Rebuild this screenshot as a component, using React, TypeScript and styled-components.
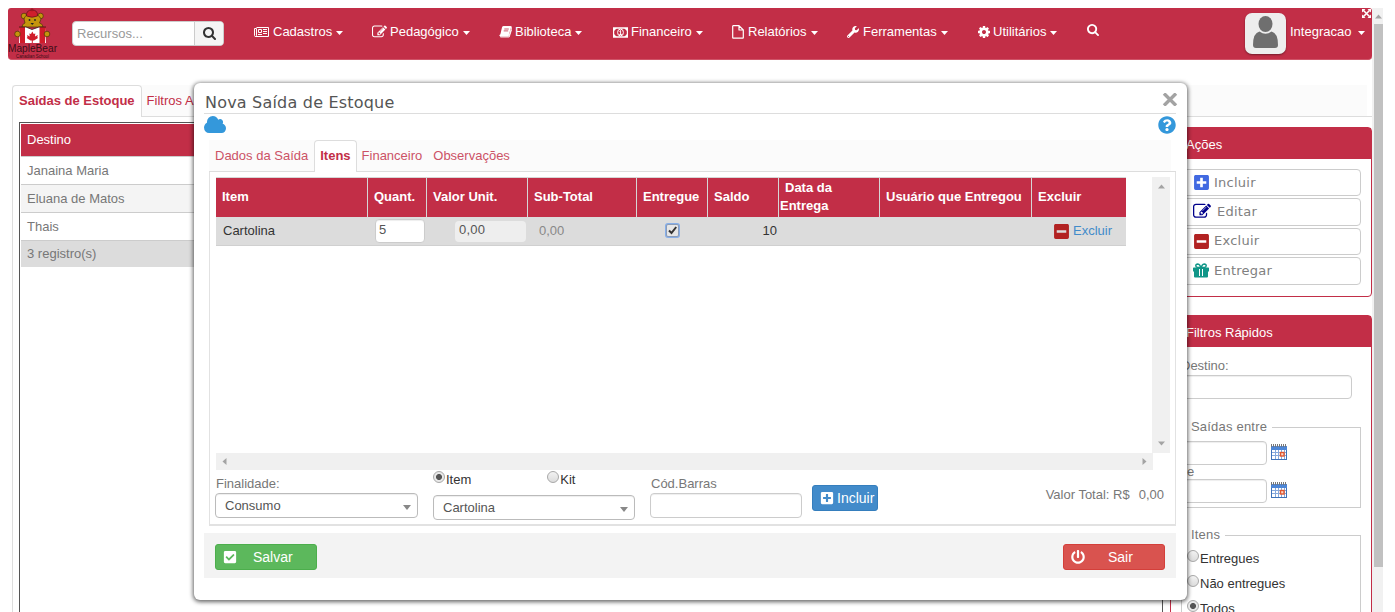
import React from "react";
import styled, { createGlobalStyle } from "styled-components";
import {
  FaWrench,
  FaPlusSquare,
  FaMinusSquare,
  FaCheckSquare,
  FaPowerOff,
  FaQuestionCircle,
} from "react-icons/fa";

const RED = "#c22e47";

const Global = createGlobalStyle`
  *, *::before, *::after { box-sizing: border-box; }
  body { margin: 0; background: #fff; font: 13px/18px "Liberation Sans", Arial, sans-serif; color: #777; }
  input, button { font-family: inherit; }
`;

const Screen = styled.div`
  position: relative;
  width: 1395px;
  height: 612px;
  overflow: hidden;
  padding: 8px 12px 0 8px;
  display: flex;
  align-items: flex-start;
`;

const Page = styled.div`
  width: 1364px;
  height: 604px;
  flex: none;
`;

/* ---------- header ---------- */
const Header = styled.header`
  height: 52px;
  display: flex;
  background: ${RED};
  border-bottom: 1px solid #cf5468;
  border-radius: 3px 3px 4px 4px;
  color: #fff;
`;

const LogoBox = styled.div`
  width: 64px;
  height: 52px;
`;

const SearchGroup = styled.div`
  display: flex;
  width: 152px;
  height: 25px;
  margin-top: 13px;
  border: 1px solid #ccc;
  border-radius: 4px;
  overflow: hidden;
  background: #fff;
`;

const SearchField = styled.div`
  width: 121px;
  padding-left: 4px;
  line-height: 24px;
  color: #999;
`;

const SearchButton = styled.div`
  flex: 1;
  display: flex;
  align-items: center;
  justify-content: center;
  border-left: 1px solid #ccc;
  background: #f5f5f5;
  color: #333;
`;

const Nav = styled.nav`
  display: flex;
  margin-left: 30px;
  padding-top: 15px;
  width: 991px;
`;

const NavItem = styled.div<{ $w: number }>`
  width: ${(p) => p.$w}px;
  height: 18px;
  display: flex;
  align-items: center;
  white-space: nowrap;
`;

const NavIcon = styled.span<{ $w: number }>`
  width: ${(p) => p.$w}px;
  display: flex;
`;

const CaretBox = styled.span<{ $gap: number }>`
  display: flex;
  margin: 2px 0 0 ${(p) => p.$gap}px;
`;

const NavSearch = styled.div`
  padding-top: 1px;
  display: flex;
`;

const User = styled.div`
  position: relative;
  flex: 1;
  display: flex;
  align-items: center;
  height: 48px;
`;

const Avatar = styled.div`
  width: 41px;
  height: 41px;
  margin: 3px 4px 0 0;
  border-radius: 7px;
  background: #eee;
  box-shadow: 0 1px 2px rgba(0, 0, 0, 0.4);
`;

const Expand = styled.div`
  position: absolute;
  right: 1px;
  top: 1px;
  width: 9px;
  height: 9px;
  display: flex;
`;

/* ---------- page body ---------- */
const Workspace = styled.main`
  margin: 25px 0 0 4px;
  height: 540px;
`;

const TabStrip = styled.div<{ $gapRight: number }>`
  display: flex;
  height: 32px;
  border-bottom: 1px solid #ddd;
  background: linear-gradient(#fbfbfb, #fbfbfb) 0 0 / calc(100% - ${(p) => p.$gapRight}px) 100% no-repeat;
  color: ${RED};
`;

const Tab = styled.div<{ $active?: boolean; $pad: string; $soft?: boolean }>`
  height: 32px;
  padding: ${(p) => p.$pad};
  line-height: 30px;
  white-space: nowrap;
  ${(p) => p.$soft && "color: #cc5266;"}
  ${(p) =>
    p.$active &&
    `font-weight: bold; color: ${RED}; background: #fff; border: 1px solid #ddd; border-bottom: 0; border-radius: 4px 4px 0 0;`}
`;

const WorkBody = styled.div`
  display: flex;
  height: 508px;
  padding-top: 5px;
  padding-left: 6px;
  border-left: 1px solid #ddd;
`;

const ListFrame = styled.section`
  width: 1144px;
  height: 520px;
  border: 1px solid #555;
  padding: 1px;
`;

const ListHead = styled.div`
  height: 32px;
  padding-left: 6px;
  line-height: 31px;
  color: #fff;
  background: ${RED};
`;

const ListRow = styled.div<{ $bg: string; $h: number }>`
  height: ${(p) => p.$h}px;
  padding-left: 6px;
  line-height: ${(p) => p.$h - 1}px;
  border-top: 1px solid #ccc;
  background: ${(p) => p.$bg};
`;

const Side = styled.aside`
  width: 202px;
  margin: 5px 0 0 7px;
  display: flex;
  flex-direction: column;
  gap: 18px;
`;

const Panel = styled.section<{ $h: number }>`
  height: ${(p) => p.$h}px;
  flex: none;
  border: 1px solid ${RED};
  border-radius: 4px;
`;

const PanelHead = styled.div`
  height: 31px;
  padding-left: 15px;
  line-height: 34px;
  color: #fff;
  background: ${RED};
`;

const ActionList = styled.div`
  display: flex;
  flex-direction: column;
  gap: 2px;
  padding: 10px 10px 0;
`;

const Action = styled.div`
  display: flex;
  align-items: center;
  height: 27.4px;
  padding-left: 11px;
  border: 1px solid #ccc;
  border-radius: 4px;
  font: 13px/18px "DejaVu Sans", Verdana, sans-serif;
  letter-spacing: 0.25px;
  color: #808080;
`;

const ActionIcon = styled.span<{ $w: number; $color: string }>`
  width: ${(p) => p.$w}px;
  display: flex;
  color: ${(p) => p.$color};
`;

const FilterBody = styled.div`
  padding: 10px 10px 0;
`;

const Input = styled.div<{ $w: number; $h?: number }>`
  width: ${(p) => p.$w}px;
  height: ${(p) => p.$h ?? 24}px;
  border: 1px solid #ccc;
  border-radius: 4px;
  background: #fff;
  box-shadow: inset 0 1px 1px rgba(0, 0, 0, 0.07);
`;

const Group = styled.fieldset<{ $top: number; $h: number }>`
  margin: ${(p) => p.$top}px 0 0;
  height: ${(p) => p.$h}px;
  padding: 0 0 0 5px;
  border: 1px solid #ccc;
  min-width: 0;
`;

const Legend = styled.legend`
  margin-left: 0;
  padding: 0 5px 0 4px;
  height: 18px;
  letter-spacing: 0.2px;
`;

const DateRows = styled.div`
  padding-top: 5px;
  line-height: 14px;
`;

const DateRow = styled.div`
  display: flex;
  align-items: flex-start;
  gap: 4px;
  margin-left: -6px;
  svg {
    margin-top: 3px;
  }
`;

const RadioRows = styled.div`
  padding-top: 6px;
`;

const RadioRow = styled.div<{ $h: number }>`
  display: flex;
  height: ${(p) => p.$h}px;
  align-items: flex-start;
  color: #333;
`;

const Radio = styled.span<{ $on?: boolean }>`
  width: 12px;
  height: 12px;
  margin-right: 1px;
  flex: none;
  border: 1px solid #a8a8a8;
  border-radius: 50%;
  background: ${(p) =>
    p.$on
      ? "radial-gradient(circle, #555 0 2.6px, #e8e8e8 3.4px)"
      : "linear-gradient(#f2f2f2, #dcdcdc)"};
`;

const PageScroll = styled.div`
  width: 11px;
  height: 604px;
  flex: none;
  padding: 5px 0 0 2px;
  background: #f1f1f1;
  display: flex;
  flex-direction: column;
  align-items: center;
`;

const Thumb = styled.div`
  width: 9px;
  height: 543px;
  margin-top: 4px;
  background: #c1c1c1;
`;

/* ---------- dialog ---------- */
const Dialog = styled.div`
  position: absolute;
  left: 194px;
  top: 83px;
  width: 993px;
  height: 517px;
  padding: 1px 11px 0 10px;
  border-radius: 6px;
  background: #fff;
  box-shadow: 0 1px 4px 1px rgba(0, 0, 0, 0.6);
`;

const TitleBar = styled.div`
  display: flex;
  height: 30px;
  justify-content: space-between;
  border-bottom: 1px solid #ddd;
  padding-left: 1px;
  font: 16px/37px "DejaVu Sans", Verdana, sans-serif;
  letter-spacing: 0.2px;
  color: #555;
`;

const Close = styled.div`
  display: flex;
  margin: 9px -2px 0 0;
`;

const StatusRow = styled.div`
  display: flex;
  justify-content: space-between;
  height: 26px;
  padding-top: 2px;
  color: #3498db;
`;

const TabArea = styled.div`
  margin-left: 5px;
`;

const TabPanel = styled.div`
  height: 354px;
  padding: 5px 5px 0 6px;
  border: solid #e2e2e2;
  border-width: 0 1px 2px;
`;

const GridArea = styled.div`
  display: flex;
  height: 276px;
`;

const GridBody = styled.div`
  width: 936px;
`;

const GRID = "152px 59px 101px 109px 71px 71px 101px 152px 94px";

const GridHead = styled.div`
  display: grid;
  grid-template-columns: ${GRID};
  width: 910px;
  height: 40px;
  border-top: 1px solid #d6d6d6;
`;

const HeadCell = styled.div`
  display: flex;
  align-items: center;
  padding: 0 1px 2px 6px;
  border-right: 1px solid #d6d6d6;
  background: ${RED};
  color: #fff;
  font-weight: bold;
  white-space: nowrap;
  &:last-child {
    border-right: 0;
  }
`;

const TwoLine = styled.div`
  margin-left: -5px;
  line-height: 18px;
  span {
    padding-left: 5px;
  }
`;

const GridRow = styled.div`
  display: grid;
  grid-template-columns: ${GRID};
  width: 910px;
  height: 29px;
  align-items: center;
  background: #dcdcdc;
  border-bottom: 1px solid #d0d0d0;
`;

const Cell = styled.div<{ $pad?: number; $right?: boolean; $color?: string }>`
  display: flex;
  align-items: center;
  gap: 3px;
  justify-content: ${(p) => (p.$right ? "flex-end" : "flex-start")};
  padding: ${(p) => (p.$right ? `0 ${p.$pad ?? 0}px 0 0` : `0 0 0 ${p.$pad ?? 0}px`)};
  color: ${(p) => p.$color ?? "#333"};
  white-space: nowrap;
`;

const Qty = styled(Input)`
  padding-left: 3px;
  line-height: 20px;
  color: #555;
  margin-top: -1px;
`;

const Locked = styled.div`
  width: 71px;
  height: 21px;
  padding-left: 4px;
  border-radius: 4px;
  line-height: 18px;
  letter-spacing: 0.2px;
  background: #eee;
  color: #555;
`;

const Check = styled.span`
  width: 13px;
  height: 13px;
  margin-top: -1px;
  display: flex;
  background: #e6e6e6;
  border: 1px solid #8a9cb8;
  border-radius: 2px;
  box-shadow: 0 0 0 1px #86aee8;
`;

const VScroll = styled.div`
  width: 18px;
  height: 276px;
  padding: 6px 0;
  display: flex;
  flex-direction: column;
  align-items: center;
  justify-content: space-between;
  background: #f0f0f0;
`;

const HScroll = styled.div`
  width: 937px;
  height: 17px;
  padding: 0 5px;
  display: flex;
  align-items: center;
  justify-content: space-between;
  background: #f0f0f0;
`;

const EntryForm = styled.div`
  display: flex;
  align-items: flex-start;
  margin-left: -1px;
`;

const Field = styled.div<{ $w: number; $top: number; $ml?: number; $indent?: number }>`
  width: ${(p) => p.$w}px;
  margin: ${(p) => p.$top}px 0 0 ${(p) => p.$ml ?? 0}px;
  text-indent: ${(p) => p.$indent ?? 0}px;
  white-space: nowrap;
`;

const Select = styled(Input)`
  display: flex;
  align-items: center;
  justify-content: space-between;
  padding: 0 6px 0 9px;
  border-color: #bbb;
  text-indent: 0;
  color: #555;
`;

const SelectCaret = styled.span`
  margin-top: 4px;
  border: 4px solid transparent;
  border-top: 5px solid #888;
  border-bottom: 0;
`;

const Kinds = styled.div`
  display: flex;
  height: 24px;
  gap: 76px;
`;

const Button = styled.div<{ $w: number; $bg: string; $edge: string; $gap: number }>`
  display: flex;
  align-items: center;
  gap: ${(p) => p.$gap}px;
  width: ${(p) => p.$w}px;
  height: 26px;
  padding-left: 7px;
  border: 1px solid ${(p) => p.$edge};
  border-radius: 3px;
  background: ${(p) => p.$bg};
  color: #fff;
  font-size: 14px;
`;

const Total = styled.div`
  display: flex;
  gap: 9px;
  margin: 16px 6px 0 auto;
  white-space: pre;
`;

const Footer = styled.footer`
  display: flex;
  justify-content: space-between;
  height: 45px;
  margin-top: 7px;
  padding: 11px 11px 0;
  background: #f3f3f3;
`;

/* ---------- drawings ---------- */
const Caret = ({ gap = 4 }: { gap?: number }) => (
  <CaretBox $gap={gap}>
    <svg width="7" height="4" viewBox="0 0 7 4" fill="currentColor">
      <path d="M0 0H7L3.5 4Z" />
    </svg>
  </CaretBox>
);

const turns = { down: 0, left: 90, up: 180, right: 270 };

const Arrow = ({ dir }: { dir: keyof typeof turns }) => (
  <svg width="7" height="7" viewBox="0 0 7 7" fill="#a3a3a3">
    <path d="M0 1.500H7L3.500 5.500Z" transform={`rotate(${turns[dir]} 3.5 3.5)`} />
  </svg>
);

const Search = ({ size }: { size: number }) => (
  <svg width={size} height={size} viewBox="64 128 1664 1664" fill="currentColor">
    <path d="M1216 832q0-185-131.500-316.500t-316.500-131.500-316.500 131.500-131.500 316.500 131.500 316.500 316.500 131.500 316.500-131.500 131.500-316.500zm512 832q0 52-38 90t-90 38q-54 0-90-38l-343-342q-179 124-399 124-143 0-273.500-55.500t-225-150-150-225-55.500-273.500 55.500-273.500 150-225 225-150 273.500-55.500 273.500 55.500 225 150 150 225 55.500 273.500q0 220-124 399l343 343q37 37 37 90z" />
  </svg>
);

const Edit = ({ size }: { size: number }) => (
  <svg width={size} height={size} viewBox="64 64 1792 1792" fill="currentColor">
    <path d="M888 1184l116-116-152-152-116 116v56h96v96h56zm440-720q-16-16-33 1l-350 350q-17 17-1 33t33-1l350-350q17-17 1-33zm80 594v190q0 119-84.500 203.500t-203.500 84.500h-832q-119 0-203.500-84.500t-84.500-203.500v-832q0-119 84.500-203.500t203.500-84.500h832q63 0 117 25 15 7 18 23 3 17-9 29l-49 49q-14 14-32 8-23-6-45-6h-832q-66 0-113 47t-47 113v832q0 66 47 113t113 47h832q66 0 113-47t47-113v-126q0-13 9-22l64-64q15-15 35-7t20 29zm-96-738l288 288-672 672h-288v-288zm444 132l-92 92-288-288 92-92q28-28 68-28t68 28l152 152q28 28 28 68t-28 68z" transform="translate(64 0)" />
  </svg>
);

const Cog = () => (
  <svg width="12" height="12" viewBox="128 128 1536 1536" fill="currentColor">
    <path d="M1152 896q0-106-75-181t-181-75-181 75-75 181 75 181 181 75 181-75 75-181zm512-109v222q0 12-8 23t-20 13l-185 28q-19 54-39 91 35 50 107 138 10 12 10 25t-9 23q-27 37-99 108t-94 71q-12 0-26-9l-138-108q-44 23-91 38-16 136-29 186-7 28-36 28h-222q-14 0-24.500-8.500t-11.500-21.500l-28-184q-49-16-90-37l-141 107q-10 9-25 9-14 0-25-11-126-114-165-168-7-10-7-23 0-12 8-23 15-21 51-66.500t54-70.500q-27-50-41-99l-183-27q-13-2-21-12.500t-8-23.500v-222q0-12 8-23t19-13l186-28q14-46 39-92-40-57-107-138-10-12-10-24 0-10 9-23 26-36 98.500-107.500t94.500-71.500q13 0 26 10l138 107q44-23 91-38 16-136 29-186 7-28 36-28h222q14 0 24.500 8.500t11.500 21.500l28 184q49 16 90 37l142-107q9-9 24-9 13 0 25 10 129 119 165 170 7 8 7 22 0 12-8 23-15 21-51 66.500t-54 70.500q26 50 41 98l183 28q13 2 21 12.500t8 23.500z" />
  </svg>
);

const News = () => (
  <svg width="15" height="12" viewBox="0 0 15 12" fill="none" stroke="currentColor">
    <path d="M2.500 1.500H14.500V10.500H1.700Q.5 10.500.5 9.500V2.500H2.500V9.500Q2.500 10.500 1.500 10.500" />
    <path d="M4.500 3.500H7.500V6.500H4.500ZM9 3.500H13M9 5.500H13M9 7.500H13M4 8.500H8" />
  </svg>
);

const Book = () => (
  <svg width="13" height="12" viewBox="0 0 13 12">
    <path d="M4.200 .5H11.800Q12.900.6 12.600 1.700L10.300 9.300Q10 10.200 9.100 10.200H2Q1.200 10.300 1.400 11H10.200L12.600 3.600" fill="none" stroke="currentColor" strokeWidth=".9" />
    <path d="M4 .3H11.500Q12.400.4 12.100 1.400L9.800 9H1.200L3 1.500Q3.300.3 4 .3Z" fill="currentColor" />
    <path d="M.4 10Q.2 8.800 1.200 8.500L9.800 9V10Z" fill="currentColor" />
    <path d="M5.300 3H9.800M4.700 4.900H9.200" stroke={RED} strokeWidth=".8" />
  </svg>
);

const Gift = () => (
  <svg width="16" height="15" viewBox="0 0 16 15">
    <path d="M8 4.500H4.800Q2.800 4.300 2.800 2.700T4.800 1Q6 1 6.700 2.200L8 4.500L9.300 2.200Q10 1 11.200 1Q13.200 1.100 13.200 2.700T11.200 4.500Z" fill="none" stroke="currentColor" strokeWidth="1.500" />
    <path d="M.7 4.500H15.300Q16 4.500 16 5.200V8.500H15V13.500Q15 14.600 14 14.600H2Q1 14.600 1 13.500V8.500H0V5.200Q0 4.500.7 4.500Z" fill="currentColor" />
    <path d="M6.500 6V13M9.500 6V13" stroke="#fff" strokeWidth="1" />
  </svg>
);

const Money = () => (
  <svg width="15" height="11" viewBox="0 0 15 11" fill="none" stroke="currentColor">
    <path d="M.5 1H14.500V10H.5Z" strokeWidth="1.400" />
    <path d="M1 1H4L1 4ZM14 1H11L14 4ZM1 10H4L1 7ZM14 10H11L14 7Z" fill="currentColor" stroke="none" />
    <ellipse cx="7.500" cy="5.500" rx="2.900" ry="3.400" />
    <path d="M6.500 4.500L7.600 3.500V7.300M6.300 7.500H8.800" />
  </svg>
);

const FileIcon = () => (
  <svg width="12" height="14" viewBox="0 0 12 14" fill="none" stroke="currentColor" strokeWidth="1.200">
    <path d="M7 .7H1.200Q.7.700.7 1.200V12.700Q.7 13.200 1.200 13.200H10.800Q11.300 13.200 11.300 12.700V5ZM7 .7V5H11.300" strokeLinejoin="round" />
  </svg>
);

const Cloud = () => (
  <svg width="22" height="17" viewBox="64 128 1920 1408" preserveAspectRatio="none" fill="currentColor">
    <path d="M1984 1152q0 159-112.500 271.500t-271.500 112.500h-1088q-185 0-316.500-131.500t-131.500-316.500q0-132 71-241.500t187-163.500q-2-28-2-43 0-212 150-362t362-150q158 0 286.500 88t187.500 230q70-62 166-62 106 0 181 75t75 181q0 75-41 138 129 30 213 134.500t84 239.500z" />
  </svg>
);

const CalendarIcon = () => (
  <svg width="16" height="17" viewBox="0 0 16 17">
    <rect x="0" y="2" width="16" height="14" fill="#3f72b8" />
    <rect x="0" y="2" width="16" height="4" fill="#4d86d6" />
    <path d="M.5 0V3M2.500 0V3M4.500 0V3M6.500 0V3M8.500 0V3M10.500 0V3M12.500 0V3M14.500 0V3" stroke="#777" />
    <rect x="1" y="6" width="14" height="9" fill="#fff" />
    <path d="M4.500 6V15M7.500 6V15M10.500 6V15M13.500 6V15M1 8.500H15M1 11.500H15" stroke="#86a9dc" />
    <rect x="9.500" y="8.500" width="3.500" height="3.500" fill="#fbd9c8" stroke="#e2572f" strokeWidth="1.400" />
  </svg>
);

const Logo = () => (
  <svg width="64" height="52" viewBox="0 0 64 52">
    <g fill="#c4950c" stroke="#4a3208" strokeWidth=".7">
      <circle cx="16" cy="8" r="2.800" />
      <circle cx="32.500" cy="8" r="2.800" />
      <path d="M14 19Q14 16 17 15L16 11Q17 6 24 6T33 11L31.500 15Q35 16 35 19Z" />
    </g>
    <path d="M18.500 8Q18 2 24 2T29.500 8Q24 10.500 18.500 8Z" fill="#cf1f2c" stroke="#5b1219" strokeWidth=".7" />
    <circle cx="24" cy="1.800" r="1.500" fill="#9c1822" />
    <circle cx="21.500" cy="12" r=".9" fill="#222" />
    <circle cx="27" cy="12" r=".9" fill="#222" />
    <path d="M22.500 15H26L24.200 17Z" fill="#222" />
    <path d="M11 19L18 19L24 21.500L31 19L38 19V35H11Z" fill="#fff" />
    <path d="M11 19L17 19V35H12ZM38 19L31.500 19V35H37Z" fill="#d01c2a" />
    <path d="M11 19H18L24 21.500L31 19H38" stroke="#3a1a12" fill="none" strokeWidth=".8" />
    <path d="M24.300 23.500L25.700 26L27.300 25.500L27 28.500L29.800 27L29.300 29L30 30L26 32.500H24.800V35H23.800V32.500H22.500L18.700 30L19.500 29L19 27L21.800 28.500L21.300 25.500L23 26Z" fill="#d01c2a" />
    <g fill="#c4950c" stroke="#4a3208" strokeWidth=".7">
      <circle cx="9.500" cy="26" r="2.800" />
      <circle cx="39" cy="26" r="2.800" />
    </g>
    <text x="0" y="43.500" fontFamily="Liberation Sans, Arial, sans-serif" fontSize="10" textLength="49" lengthAdjust="spacingAndGlyphs" fill="#3a0f18">MapleBear</text>
    <text x="8" y="50.300" fontFamily="Liberation Sans, Arial, sans-serif" fontSize="4.500" textLength="33" lengthAdjust="spacingAndGlyphs" fill="#3a0f18">Canadian School</text>
  </svg>
);

const nav: { label: string; w: number; iw: number; icon: React.ReactNode }[] = [
  { label: "Cadastros", w: 118, iw: 19, icon: <News /> },
  { label: "Pedagógico", w: 127, iw: 18, icon: <Edit size={15} /> },
  { label: "Biblioteca", w: 114, iw: 16, icon: <Book /> },
  { label: "Financeiro", w: 119, iw: 18, icon: <Money /> },
  { label: "Relatórios", w: 115, iw: 16, icon: <FileIcon /> },
  { label: "Ferramentas", w: 131, iw: 16, icon: <FaWrench size={12} /> },
  { label: "Utilitários", w: 109, iw: 15, icon: <Cog /> },
];

export default function App() {
  return (
    <>
      <Global />
      <Screen>
        <Page>
          <Header>
            <LogoBox><Logo /></LogoBox>
            <SearchGroup>
              <SearchField>Recursos...</SearchField>
              <SearchButton><Search size={13} /></SearchButton>
            </SearchGroup>
            <Nav>
              {nav.map((n) => (
                <NavItem key={n.label} $w={n.w}>
                  <NavIcon $w={n.iw}>{n.icon}</NavIcon>
                  {n.label}
                  <Caret />
                </NavItem>
              ))}
              <NavSearch><Search size={12} /></NavSearch>
            </Nav>
            <User>
              <Avatar>
                <svg width="41" height="41" viewBox="0 0 41 41" fill="#6f6f6f">
                  <ellipse cx="20.500" cy="11" rx="7" ry="8" />
                  <path d="M8 32Q8 20 14.500 18.500Q20.500 23 26.500 18.500Q33 20 33 32Q33 35 30 35H11Q8 35 8 32Z" />
                </svg>
              </Avatar>
              Integracao
              <Caret gap={7} />
              <Expand>
                <svg width="9" height="9" viewBox="0 0 9 9" fill="#fff">
                  <path d="M0 0H3.500L0 3.500ZM9 0V3.500L5.500 0ZM0 9V5.500L3.500 9ZM9 9H5.500L9 5.500Z" />
                  <path d="M1.500 1.500L7.500 7.500M7.500 1.500L1.500 7.500" stroke="#fff" strokeWidth="1.600" />
                </svg>
              </Expand>
            </User>
          </Header>
          <Workspace>
            <TabStrip $gapRight={5}>
              <Tab $active $pad="0 6px">Saídas de Estoque</Tab>
              <Tab $pad="1px 5px">Filtros A</Tab>
            </TabStrip>
            <WorkBody>
              <ListFrame>
                <ListHead>Destino</ListHead>
                <ListRow $bg="#fff" $h={28}>Janaina Maria</ListRow>
                <ListRow $bg="#f4f4f4" $h={28}>Eluana de Matos</ListRow>
                <ListRow $bg="#fff" $h={28}>Thais</ListRow>
                <ListRow $bg="#dcdcdc" $h={27}>3 registro(s)</ListRow>
              </ListFrame>
              <Side>
                <Panel $h={170}>
                  <PanelHead>Ações</PanelHead>
                  <ActionList>
                    <Action><ActionIcon $w={21} $color="#4169e1"><FaPlusSquare size={17} /></ActionIcon>Incluir</Action>
                    <Action><ActionIcon $w={24} $color="#00008b"><Edit size={18} /></ActionIcon>Editar</Action>
                    <Action><ActionIcon $w={21} $color="#b22222"><FaMinusSquare size={17} /></ActionIcon>Excluir</Action>
                    <Action><ActionIcon $w={21} $color="#109688"><Gift /></ActionIcon>Entregar</Action>
                  </ActionList>
                </Panel>
                <Panel $h={320}>
                  <PanelHead>Filtros Rápidos</PanelHead>
                  <FilterBody>
                    <div>Destino:</div>
                    <Input $w={171} />
                    <Group $top={19} $h={90}>
                      <Legend>Saídas entre</Legend>
                      <DateRows>
                        <DateRow><Input $w={86} /><CalendarIcon /></DateRow>
                        <div>e</div>
                        <DateRow><Input $w={86} /><CalendarIcon /></DateRow>
                      </DateRows>
                    </Group>
                    <Group $top={18} $h={120}>
                      <Legend>Itens</Legend>
                      <RadioRows>
                        <RadioRow $h={25}><Radio /><span>Entregues</span></RadioRow>
                        <RadioRow $h={25}><Radio /><span>Não entregues</span></RadioRow>
                        <RadioRow $h={25}><Radio $on /><span>Todos</span></RadioRow>
                      </RadioRows>
                    </Group>
                  </FilterBody>
                </Panel>
              </Side>
            </WorkBody>
          </Workspace>
        </Page>
        <PageScroll>
          <Arrow dir="up" />
          <Thumb />
        </PageScroll>

        <Dialog>
          <TitleBar>
            Nova Saída de Estoque
            <Close>
              <svg width="16" height="13" viewBox="0 0 16 13">
                <path d="M2 .5L14 12.500M14 .5L2 12.500" stroke="#a3a3a3" strokeWidth="3.400" />
              </svg>
            </Close>
          </TitleBar>
          <StatusRow>
            <Cloud />
            <FaQuestionCircle size={18} />
          </StatusRow>
          <TabArea>
            <TabStrip $gapRight={5}>
              <Tab $soft $pad="1px 6px">Dados da Saída</Tab>
              <Tab $active $pad="0 5px">Itens</Tab>
              <Tab $soft $pad="1px 5px">Financeiro</Tab>
              <Tab $soft $pad="1px 6px">Observações</Tab>
            </TabStrip>
            <TabPanel>
              <GridArea>
                <GridBody>
                  <GridHead>
                    <HeadCell>Item</HeadCell>
                    <HeadCell>Quant.</HeadCell>
                    <HeadCell>Valor Unit.</HeadCell>
                    <HeadCell>Sub-Total</HeadCell>
                    <HeadCell>Entregue</HeadCell>
                    <HeadCell>Saldo</HeadCell>
                    <HeadCell><TwoLine><span>Data da</span><br />Entrega</TwoLine></HeadCell>
                    <HeadCell>Usuário que Entregou</HeadCell>
                    <HeadCell>Excluir</HeadCell>
                  </GridHead>
                  <GridRow>
                    <Cell $pad={7}>Cartolina</Cell>
                    <Cell $pad={7}><Qty $w={50}>5</Qty></Cell>
                    <Cell $pad={28}><Locked>0,00</Locked></Cell>
                    <Cell $pad={11} $color="#888">0,00</Cell>
                    <Cell $pad={29}>
                      <Check>
                        <svg width="11" height="11" viewBox="0 0 11 11" fill="none" stroke="#333" strokeWidth="2">
                          <path d="M2 5.500L4.500 8L9.200 2" />
                        </svg>
                      </Check>
                    </Cell>
                    <Cell $right $pad={2}>10</Cell>
                    <Cell />
                    <Cell />
                    <Cell $pad={21} $color="#428bca">
                      <FaMinusSquare size={17} color="#b22222" />Excluir
                    </Cell>
                  </GridRow>
                </GridBody>
                <VScroll><Arrow dir="up" /><Arrow dir="down" /></VScroll>
              </GridArea>
              <HScroll><Arrow dir="left" /><Arrow dir="right" /></HScroll>
              <EntryForm>
                <Field $w={203} $top={5} $indent={1}>
                  Finalidade:
                  <Select $w={203} $h={25}>Consumo<SelectCaret /></Select>
                </Field>
                <Field $w={202} $top={1} $ml={15}>
                  <Kinds>
                    <RadioRow $h={20}><Radio $on /><span>Item</span></RadioRow>
                    <RadioRow $h={20}><Radio /><span>Kit</span></RadioRow>
                  </Kinds>
                  <Select $w={202} $h={25}>Cartolina<SelectCaret /></Select>
                </Field>
                <Field $w={152} $top={5} $ml={15} $indent={1}>
                  Cód.Barras
                  <Input $w={152} $h={25} />
                </Field>
                <Field $w={66} $top={15} $ml={10}>
                  <Button $w={66} $bg="#428bca" $edge="#357ebd" $gap={3}>
                    <FaPlusSquare size={14} />Incluir
                  </Button>
                </Field>
                <Total><span>Valor Total: R$</span><span>0,00</span></Total>
              </EntryForm>
            </TabPanel>
          </TabArea>
          <Footer>
            <Button $w={102} $bg="#5cb85c" $edge="#4cae4c" $gap={16}>
              <FaCheckSquare size={14} />Salvar
            </Button>
            <Button $w={102} $bg="#d9534f" $edge="#d43f3a" $gap={23}>
              <FaPowerOff size={14} />Sair
            </Button>
          </Footer>
        </Dialog>
      </Screen>
    </>
  );
}
